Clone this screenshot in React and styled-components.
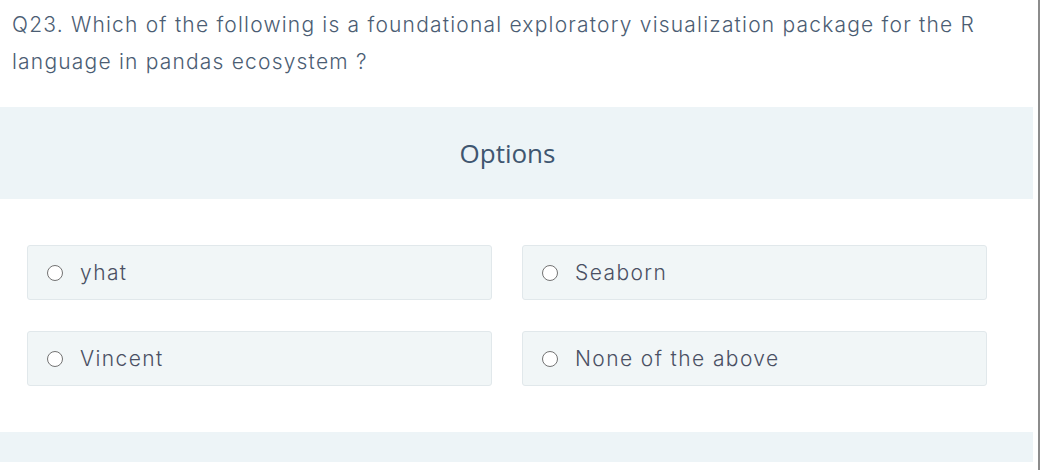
import React from "react";
import styled, { createGlobalStyle } from "styled-components";

const Global = createGlobalStyle`
  html, body { margin: 0; padding: 0; background: #fff; }
  body { width: 1040px; height: 470px; overflow: hidden; }
`;

const Page = styled.div`
  display: flex;
  width: 1040px;
  height: 470px;
  overflow: hidden;
`;

const Main = styled.div`
  width: 1033px;
  display: flex;
  flex-direction: column;
`;

const Rule = styled.div`
  width: 2px;
  margin-left: 5px;
  background: #8c8c8c;
  height: 470px;
`;

const Question = styled.div`
  padding: 6px 40px 0 12px;
  height: 107px;
  box-sizing: border-box;
  font-family: Inter, "Open Sans", sans-serif;
  font-size: 21px;
  font-weight: 300;
  letter-spacing: 1.2px;
  line-height: 37px;
  color: #4b5d73;
`;

const Band = styled.div`
  height: ${(p) => p.$h}px;
  background: #edf4f7;
  display: flex;
  align-items: center;
  justify-content: center;
  padding-right: ${(p) => p.$pr || 0}px;
  box-sizing: border-box;
`;

const BandTitle = styled.div`
  font-family: "Open Sans", sans-serif;
  font-size: 26px;
  color: #3f5670;
`;

const Grid = styled.div`
  display: grid;
  grid-template-columns: 465px 465px;
  column-gap: 30px;
  row-gap: 31px;
  padding: 46px 0 46px 27px;
`;

const Option = styled.label`
  height: 55px;
  box-sizing: border-box;
  background: #f1f6f7;
  border: 1px solid #e1e8eb;
  border-radius: 3px;
  display: flex;
  align-items: center;
  padding-left: 19px;
  gap: 17px;
  font-family: Inter, "Open Sans", sans-serif;
  font-size: 21px;
  font-weight: 300;
  letter-spacing: 1.4px;
  color: #4a5063;
`;

const Radio = styled.span`
  width: 16px;
  height: 16px;
  box-sizing: border-box;
  border: 1.5px solid #737373;
  border-radius: 50%;
  background: #fff;
  flex: none;
`;

const options = ["yhat", "Seaborn", "Vincent", "None of the above"];

export default function App() {
  return (
    <Page>
      <Global />
      <Main>
        <Question>
          Q23. Which of the following is a foundational exploratory visualization package for the R
          language in pandas ecosystem ?
        </Question>
        <Band $h={92} $pr={18}>
          <BandTitle>Options</BandTitle>
        </Band>
        <Grid>
          {options.map((o) => (
            <Option key={o}>
              <Radio />
              {o}
            </Option>
          ))}
        </Grid>
        <Band $h={30} />
      </Main>
      <Rule />
    </Page>
  );
}
